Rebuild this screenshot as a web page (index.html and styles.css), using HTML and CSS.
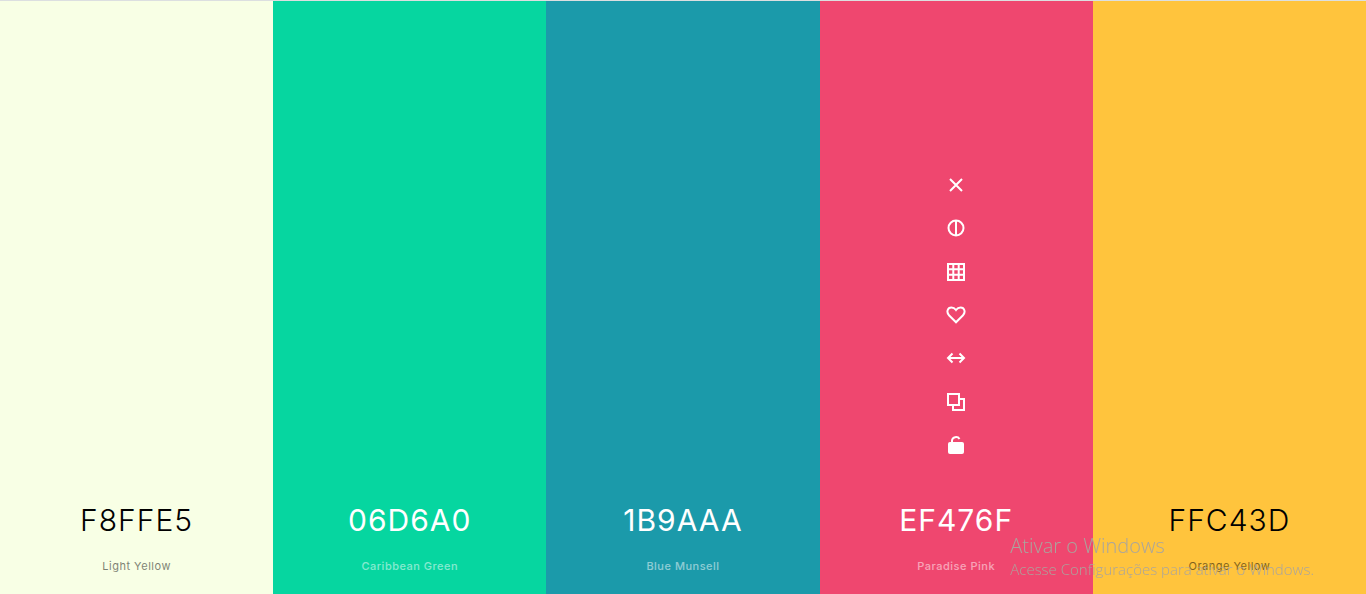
FILE: index.html
```html
<!DOCTYPE html>
<html lang="en">
<head>
<meta charset="utf-8">
<title>Palette</title>
<link rel="stylesheet" href="styles.css">
</head>
<body>
<main class="palette">
  <section class="color color-light-yellow">
    <button class="hex">F8FFE5</button>
    <p class="name">Light Yellow</p>
  </section>
  <section class="color color-green on-dark">
    <button class="hex">06D6A0</button>
    <p class="name">Caribbean Green</p>
  </section>
  <section class="color color-blue on-dark">
    <button class="hex">1B9AAA</button>
    <p class="name">Blue Munsell</p>
  </section>
  <section class="color color-pink on-dark">
    <div class="tools">
      <button class="tool" aria-label="Remove color"><svg viewBox="0 0 20 20"><path d="M4 4l12 12M16 4L4 16"/></svg></button>
      <button class="tool" aria-label="View shades"><svg viewBox="0 0 20 20"><circle cx="10" cy="10" r="7.500"/><path d="M10 2.500v15"/></svg></button>
      <button class="tool" aria-label="Color grid"><svg viewBox="0 0 20 20"><path d="M2 2h16v16H2zM2 7.300h16M2 12.700h16M7.300 2v16M12.700 2v16"/></svg></button>
      <button class="tool" aria-label="Save color"><svg viewBox="0 0 20 20"><path d="M10 17.300L3.200 10.500C-.1 7 1.600 2.500 5.400 2.500c2 0 3.300.8 4.600 2.500c1.300-1.700 2.600-2.500 4.600-2.500c3.800 0 5.500 4.500 2.200 8z"/></svg></button>
      <button class="tool" aria-label="Drag color"><svg viewBox="0 0 20 20"><path d="M2 10h16M6.500 5.500L2 10l4.500 4.500M13.500 5.500L18 10l-4.500 4.500"/></svg></button>
      <button class="tool" aria-label="Copy color"><svg viewBox="0 0 20 20"><path d="M2 2h11v11H2zM13 7h5v11H7v-5"/></svg></button>
      <button class="tool" aria-label="Lock color"><svg viewBox="0 0 20 20"><rect class="solid" x="2" y="7" width="16" height="12" rx="2"/><path d="M6 8V5.500a4 3.700 0 0 1 7.500-1.500"/></svg></button>
    </div>
    <button class="hex">EF476F</button>
    <p class="name">Paradise Pink</p>
  </section>
  <section class="color color-orange">
    <button class="hex">FFC43D</button>
    <p class="name">Orange Yellow</p>
  </section>
</main>
<aside class="watermark">
  <p class="watermark-title">Ativar o Windows</p>
  <p class="watermark-text">Acesse Configurações para ativar o Windows.</p>
</aside>
</body>
</html>
```
FILE: styles.css
```css
* { box-sizing: border-box; }
body { margin: 0; font-family: Inter, sans-serif; }
p { margin: 0; }
button { border: 0; padding: 0; background: none; color: inherit; font: inherit; cursor: pointer; }
.palette { display: grid; grid-template-columns: repeat(5, 1fr); min-height: 100vh; border-top: 1px solid #dcdfe0; }
.color { display: flex; flex-direction: column; align-items: center; justify-content: flex-end; padding-bottom: 20px; color: #000; }
.on-dark { color: #fff; }
.color-light-yellow { background: #f8ffe5; }
.color-green { background: #06d6a0; }
.color-blue { background: #1b9aaa; }
.color-pink { background: #ef476f; }
.color-orange { background: #ffc43d; }
.hex { font-size: 30px; font-weight: 300; line-height: 40px; letter-spacing: 1px; margin-bottom: 18px; }
.name { font-size: 11px; line-height: 16px; letter-spacing: 0.5px; opacity: 0.5; }
.on-dark .hex { font-weight: 400; }
.on-dark .name { font-weight: 500; }
.tools { display: flex; flex-direction: column; justify-content: space-between; height: 280px; margin-bottom: 45px; }
.tool { display: block; width: 20px; height: 20px; }
.tool svg { display: block; width: 20px; height: 20px; fill: none; stroke: currentColor; stroke-width: 2; }
.tool .solid { fill: currentColor; stroke: none; }
.watermark { position: fixed; right: 52px; bottom: 15px; color: #aaa59d; font-family: "Open Sans", sans-serif; font-weight: 300; pointer-events: none; }
.watermark-title { font-size: 20px; line-height: 26px; }
.watermark-text { font-size: 15px; line-height: 20px; }
```
